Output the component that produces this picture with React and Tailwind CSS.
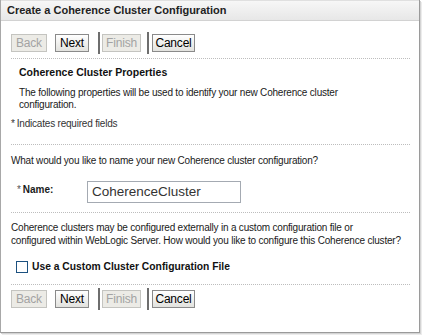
import React from "react";

const LS = { fontFamily: '"Liberation Sans", Arial, sans-serif' };

function Btn({ label, disabled, className }) {
  return (
    <div
      className={
        "h-[18px] shrink-0 flex items-center justify-center text-[12px] leading-none border " +
        (disabled
          ? "border-[#c4c4c0] bg-[#ecebe6] text-[#a3a3a3] "
          : "border-[#8a8a8a] bg-gradient-to-b from-[#ffffff] to-[#e2e2de] text-black ") +
        className
      }
    >
      {label}
    </div>
  );
}

function ButtonRow() {
  return (
    <div className="flex items-center h-[22px]">
      <Btn label="Back" disabled className="w-[36px]" />
      <div className="w-[8px] shrink-0" />
      <Btn label="Next" className="w-[34px]" />
      <div className="w-[9px] shrink-0" />
      <div className="w-[2px] h-[22px] bg-[#6e6e6e] shrink-0" />
      <div className="w-[2px] shrink-0" />
      <Btn label="Finish" disabled className="w-[39px]" />
      <div className="w-[6px] shrink-0" />
      <div className="w-[2px] h-[22px] bg-[#6e6e6e] shrink-0" />
      <div className="w-[3px] shrink-0" />
      <Btn label="Cancel" className="w-[43px]" />
    </div>
  );
}

function Dots() {
  return <div className="h-0 border-t border-dotted border-[#bdbdbd] mr-[9px]" />;
}

export default function App() {
  return (
    <div
      className="w-[422px] h-[336px] bg-white text-[10px] tracking-[-0.2px] text-[#1a1a1a] overflow-hidden"
      style={LS}
    >
      <div className="w-[420px] h-[333px] border-l border-[#a8a8a8] border-r border-b border-r-[#9a9a9a] border-b-[#9a9a9a] shadow-[1px_1px_0_#d4d4d4,2px_2px_0_#ececec] flex flex-col">
        <div className="h-[21px] shrink-0 bg-gradient-to-b from-[#f7f7f7] to-[#e7e7e7] border-b border-[#d2d2d2] border-t border-t-[#e0e0e0] flex items-center pl-[6px]">
          <span className="font-bold text-[11px] tracking-normal text-[#222]">
            Create a Coherence Cluster Configuration
          </span>
        </div>
        <div className="pl-[10px] flex flex-col">
          <div className="mt-[11px]">
            <ButtonRow />
          </div>
          <div className="mt-[4px]">
            <Dots />
          </div>
          <div className="pl-[8px] mt-[7px] h-[13px] flex items-center font-bold text-[10.5px] tracking-normal text-[#111]">
            Coherence Cluster Properties
          </div>
          <div className="pl-[8px] mt-[8px] leading-[12px] w-[400px]">
            The following properties will be used to identify your new Coherence cluster
            <br />
            configuration.
          </div>
          <div className="mt-[6px] h-[12px] flex items-center text-[#333]">
            <span className="mr-[2px]">*</span>Indicates required fields
          </div>
          <div className="mt-[15px]">
            <Dots />
          </div>
          <div className="mt-[9px] h-[12px] flex items-center">
            What would you like to name your new Coherence cluster configuration?
          </div>
          <div className="mt-[15px] flex items-start h-[22px]">
            <div className="pl-[6px] w-[76px] pt-[1px] flex items-start">
              <span className="text-[#555] mr-[2px]">*</span>
              <span className="font-bold text-[10px] tracking-normal">Name:</span>
            </div>
            <div className="w-[154px] h-[22px] border border-[#a4aab2] flex items-center pl-[4px] text-[13.5px] tracking-normal text-[#333]">
              CoherenceCluster
            </div>
          </div>
          <div className="mt-[9px]">
            <Dots />
          </div>
          <div className="mt-[8px] leading-[13px] w-[410px]">
            Coherence clusters may be configured externally in a custom configuration file or
            <br />
            configured within WebLogic Server. How would you like to configure this Coherence cluster?
          </div>
          <div className="mt-[13px] flex items-center h-[13px] pl-[5px]">
            <div className="w-[12px] h-[12px] border border-[#1c5180] bg-white mr-[4px]" />
            <span className="font-bold text-[10.3px] tracking-normal text-[#111]">
              Use a Custom Cluster Configuration File
            </span>
          </div>
          <div className="mt-[11px]">
            <Dots />
          </div>
          <div className="mt-[3px]">
            <ButtonRow />
          </div>
        </div>
      </div>
    </div>
  );
}
